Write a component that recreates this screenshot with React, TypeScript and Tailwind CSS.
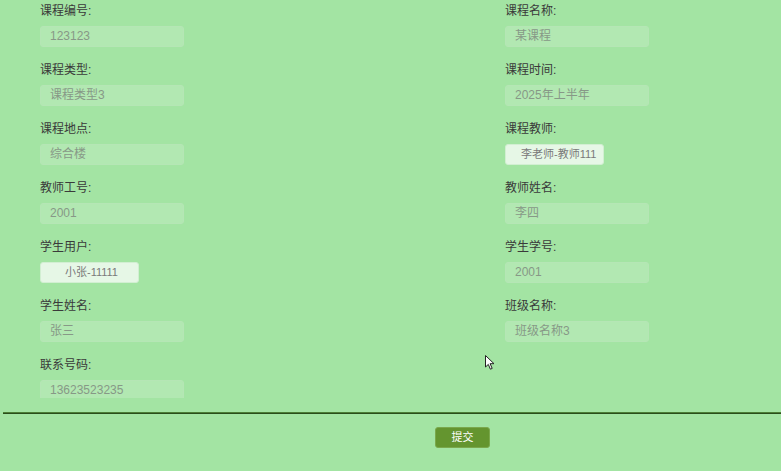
import React from 'react';

type Field = {
  label: string;
  value: string;
  kind?: 'input' | 'select';
  pad?: string;
};

const rows: [Field, Field | null][] = [
  [
    { label: '课程编号:', value: '123123' },
    { label: '课程名称:', value: '某课程' },
  ],
  [
    { label: '课程类型:', value: '课程类型3' },
    { label: '课程时间:', value: '2025年上半年' },
  ],
  [
    { label: '课程地点:', value: '综合楼' },
    { label: '课程教师:', value: '李老师-教师111', kind: 'select', pad: 'pl-[15px]' },
  ],
  [
    { label: '教师工号:', value: '2001' },
    { label: '教师姓名:', value: '李四' },
  ],
  [
    { label: '学生用户:', value: '小张-11111', kind: 'select', pad: 'pl-[24px]' },
    { label: '学生学号:', value: '2001' },
  ],
  [
    { label: '学生姓名:', value: '张三' },
    { label: '班级名称:', value: '班级名称3' },
  ],
  [{ label: '联系号码:', value: '13623523235' }, null],
];

function FormField({ field }: { field: Field }) {
  return (
    <div className="flex flex-col">
      <label className="h-4 text-[12px] leading-4 text-[#3a3a3a]">{field.label}</label>
      {field.kind === 'select' ? (
        <div
          className={`mt-[7px] h-[21px] w-[99px] rounded-[3px] border border-[#d2efd2] bg-[#e6f7e6] text-[11px] leading-[19px] text-[#7a7a7a] ${field.pad}`}
        >
          {field.value}
        </div>
      ) : (
        <div className="mt-[7px] h-[21px] w-[144px] rounded-[3px] border border-[#b5e6b5] bg-[#b2e8b2] pl-[9px] text-[12px] leading-[19px] text-[#879887]">
          {field.value}
        </div>
      )}
    </div>
  );
}

export default function App() {
  return (
    <div
      className="relative h-[471px] w-[781px] overflow-hidden bg-[#a3e4a3]"
      style={{ fontFamily: '"Liberation Sans", "Noto Sans CJK SC", sans-serif' }}
    >
      <div className="h-[398px] overflow-hidden pt-[3px] pl-[40px]">
        <div className="grid grid-cols-[465px_1fr] gap-y-[15px]">
          {rows.map(([left, right], i) => (
            <React.Fragment key={i}>
              <FormField field={left} />
              {right ? <FormField field={right} /> : <div />}
            </React.Fragment>
          ))}
        </div>
      </div>

      <div className="mt-[14px] ml-[3px] border-t border-t-[#4c7d36] border-b border-b-[#2a4d1b]" />

      <div className="pt-[10px] pl-[435px]">
        <button className="h-[21px] w-[55px] rounded-[3px] border border-[#7aa84c] bg-[#64952f] text-[11px] text-white">
          提交
        </button>
      </div>

      {/* mouse pointer */}
      <svg className="absolute left-[485px] top-[355px]" width="11" height="16" viewBox="0 0 11 16">
        <path d="M0.5 0.5 L0.5 12 L3.3 9.4 L5.4 14.2 L7.2 13.4 L5.1 8.7 L9 8.7 Z" fill="#fff" stroke="#222" strokeWidth="1" />
      </svg>
    </div>
  );
}
